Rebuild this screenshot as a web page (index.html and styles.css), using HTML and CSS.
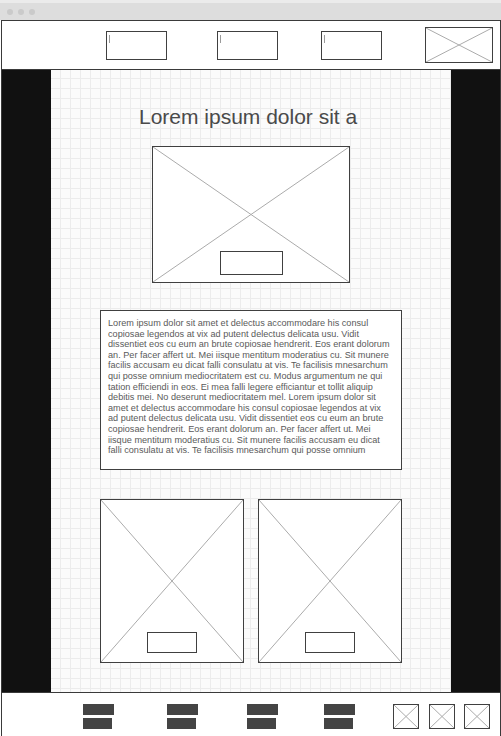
FILE: index.html
```html
<!DOCTYPE html>
<html lang="en">
<head>
  <meta charset="UTF-8">
  <title>Wireframe</title>
  <link rel="stylesheet" href="styles.css">
</head>
<body>
  <div class="titlebar">
    <span class="dot"></span>
    <span class="dot"></span>
    <span class="dot"></span>
  </div>

  <div class="frame">
    <!-- cabecera -->
    <header class="top">
      <div class="field field1"><span class="caret"></span></div>
      <div class="field field2"><span class="caret"></span></div>
      <div class="field field3"><span class="caret"></span></div>
      <div class="ph logo">
        <svg class="cross" viewBox="0 0 100 100" preserveAspectRatio="none"><path d="M0 0L100 100M100 0L0 100"/></svg>
      </div>
    </header>

    <div class="main">
      <aside class="side"></aside>

      <section class="content">
        <h1 class="title">Lorem ipsum dolor sit a&nbsp;</h1>

        <div class="ph hero">
          <svg class="cross" viewBox="0 0 100 100" preserveAspectRatio="none"><path d="M0 0L100 100M100 0L0 100"/></svg>
          <span class="btn hero-btn"></span>
        </div>

        <div class="textbox">
          <p>Lorem ipsum dolor sit amet et delectus accommodare his consul copiosae legendos at vix ad putent delectus delicata usu. Vidit dissentiet eos cu eum an brute copiosae hendrerit. Eos erant dolorum an. Per facer affert ut. Mei iisque mentitum moderatius cu. Sit munere facilis accusam eu dicat falli consulatu at vis. Te facilisis mnesarchum qui posse omnium mediocritatem est cu. Modus argumentum ne qui tation efficiendi in eos. Ei mea falli legere efficiantur et tollit aliquip debitis mei. No deserunt mediocritatem mel. Lorem ipsum dolor sit amet et delectus accommodare his consul copiosae legendos at vix ad putent delectus delicata usu. Vidit dissentiet eos cu eum an brute copiosae hendrerit. Eos erant dolorum an. Per facer affert ut. Mei iisque mentitum moderatius cu. Sit munere facilis accusam eu dicat falli consulatu at vis. Te facilisis mnesarchum qui posse omnium</p>
        </div>

        <div class="cards">
          <div class="ph card">
            <svg class="cross" viewBox="0 0 100 100" preserveAspectRatio="none"><path d="M0 0L100 100M100 0L0 100"/></svg>
            <span class="btn card-btn"></span>
          </div>
          <div class="ph card">
            <svg class="cross" viewBox="0 0 100 100" preserveAspectRatio="none"><path d="M0 0L100 100M100 0L0 100"/></svg>
            <span class="btn card-btn"></span>
          </div>
        </div>
      </section>

      <aside class="side"></aside>
    </div>

    <!-- pie -->
    <footer class="bottom">
      <div class="menu menu1"><span class="bar"></span><span class="bar short"></span></div>
      <div class="menu menu2"><span class="bar"></span><span class="bar short"></span></div>
      <div class="menu menu3"><span class="bar"></span><span class="bar short"></span></div>
      <div class="menu menu4"><span class="bar"></span><span class="bar short"></span></div>
      <div class="ph icon icon1">
        <svg class="cross" viewBox="0 0 100 100" preserveAspectRatio="none"><path d="M0 0L100 100M100 0L0 100"/></svg>
      </div>
      <div class="ph icon icon2">
        <svg class="cross" viewBox="0 0 100 100" preserveAspectRatio="none"><path d="M0 0L100 100M100 0L0 100"/></svg>
      </div>
      <div class="ph icon icon3">
        <svg class="cross" viewBox="0 0 100 100" preserveAspectRatio="none"><path d="M0 0L100 100M100 0L0 100"/></svg>
      </div>
    </footer>
  </div>
</body>
</html>
```

FILE: styles.css
```css
* {
  box-sizing: border-box;
}

body {
  margin: 0;
  background: #ffffff;
  font-family: "Liberation Sans", Arial, sans-serif;
  overflow: hidden;
}

.titlebar {
  height: 20px;
  border-top: 3px solid #ebebeb;
  background: #dddddd;
  display: flex;
  align-items: center;
  gap: 5px;
  padding-left: 7px;
}

.dot {
  width: 6px;
  height: 6px;
  border-radius: 50%;
  background: #cacaca;
}

.frame {
  width: 500px;
  margin-left: 1px;
  border-left: 1px solid #3a3a3a;
  border-right: 1px solid #3a3a3a;
}

/* cabecera */
.top {
  height: 50px;
  border-top: 1px solid #3a3a3a;
  border-bottom: 1px solid #3a3a3a;
  background: #fff;
  display: flex;
  align-items: flex-start;
  padding-top: 10px;
}

.field {
  width: 61px;
  height: 29px;
  border: 1px solid #404040;
  background: #fff;
  padding: 3px 0 0 2px;
}

.field1 { margin-left: 104px; }
.field2 { margin-left: 50px; }
.field3 { margin-left: 43px; }

.caret {
  display: block;
  width: 1px;
  height: 8px;
  background: #9a9a9a;
}

.ph {
  position: relative;
  border: 1px solid #404040;
  background: #fff;
  display: flex;
  align-items: flex-end;
  justify-content: center;
}

.cross {
  position: absolute;
  top: 0;
  left: 0;
  width: 100%;
  height: 100%;
}

.cross path {
  stroke: #ababab;
  stroke-width: 1;
  fill: none;
  vector-effect: non-scaling-stroke;
}

.logo {
  width: 68px;
  height: 36px;
  margin-left: 43px;
  margin-top: -4px;
}

/* zona central */
.main {
  display: flex;
  height: 622px;
}

.side {
  width: 49px;
  background: #111111;
}

.content {
  width: 400px;
  background-color: #fbfbfb;
  background-image:
    linear-gradient(to right, #ececec 1px, transparent 1px),
    linear-gradient(to bottom, #ececec 1px, transparent 1px);
  background-size: 10px 10px;
  background-position: 9px 8px;
  display: flex;
  flex-direction: column;
  align-items: center;
  padding-top: 35px;
}

.title {
  margin: 0;
  font-size: 21px;
  font-weight: normal;
  line-height: 24px;
  color: #4a4a4a;
}

.btn {
  position: relative;
  border: 1px solid #404040;
  background: #fff;
}

.hero {
  width: 198px;
  height: 137px;
  margin-top: 17px;
}

.hero-btn {
  width: 63px;
  height: 24px;
  margin-bottom: 7px;
}

.textbox {
  width: 302px;
  height: 160px;
  margin-top: 27px;
  border: 1px solid #404040;
  background: #fff;
  padding: 7px 8px 0 7px;
}

.textbox p {
  margin: 0;
  font-size: 9.15px;
  line-height: 10.6px;
  color: #5a5a5a;
}

.cards {
  display: flex;
  gap: 14px;
  margin-top: 29px;
}

.card {
  width: 144px;
  height: 164px;
}

.card-btn {
  width: 50px;
  height: 21px;
  margin-bottom: 9px;
}

/* pie */
.bottom {
  height: 60px;
  border-top: 1px solid #3a3a3a;
  background: #fff;
  display: flex;
  align-items: flex-start;
  padding-top: 11px;
}

.menu {
  display: flex;
  flex-direction: column;
  gap: 3px;
}

.bar {
  display: block;
  width: 31px;
  height: 11px;
  background: #444444;
}

.bar.short {
  width: 29px;
}

.menu1 { margin-left: 81px; }
.menu2 { margin-left: 53px; }
.menu3 { margin-left: 49px; }
.menu4 { margin-left: 46px; }

.icon {
  width: 26px;
  height: 25px;
}

.icon1 { margin-left: 38px; }
.icon2 { margin-left: 10px; }
.icon3 { margin-left: 9px; }
```
